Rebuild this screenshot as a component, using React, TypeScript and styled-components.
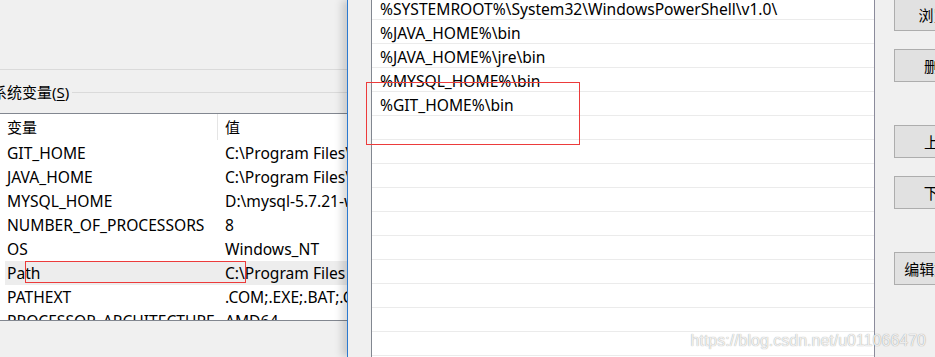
import styled, { createGlobalStyle } from 'styled-components';

const GlobalStyle = createGlobalStyle`
  body {
    margin: 0;
    background: #f0f0f0;
    font-family: 'Noto Sans', 'Noto Sans CJK SC', sans-serif;
    font-size: 15.6px;
    color: #000000;
  }
`;

const variables: [string, string][] = [
  ['GIT_HOME', 'C:\\Program Files\\Git'],
  ['JAVA_HOME', 'C:\\Program Files\\Java\\jdk1.8.0'],
  ['MYSQL_HOME', 'D:\\mysql-5.7.21-winx64'],
  ['NUMBER_OF_PROCESSORS', '8'],
  ['OS', 'Windows_NT'],
  ['Path', 'C:\\Program Files (x86)\\Common Files'],
  ['PATHEXT', '.COM;.EXE;.BAT;.CMD;.VBS'],
  ['PROCESSOR_ARCHITECTURE', 'AMD64'],
];

const paths = [
  '%SYSTEMROOT%\\System32\\WindowsPowerShell\\v1.0\\',
  '%JAVA_HOME%\\bin',
  '%JAVA_HOME%\\jre\\bin',
  '%MYSQL_HOME%\\bin',
  '%GIT_HOME%\\bin',
  '', '', '', '', '', '', '', '', '', '',
];

const buttons = [
  { label: '浏览(B)...', gap: -2 },
  { label: '删除(D)', gap: 18 },
  { label: '上移(U)', gap: 43 },
  { label: '下移(O)', gap: 18 },
  { label: '编辑文本(T)...', gap: 43 },
];

export default function App() {
  return (
    <Screen>
      <GlobalStyle />
      <LeftWindow>
        <Divider />
        <GroupHeader>
          <GroupLabel>
            系统变量(<u>S</u>)
          </GroupLabel>
          <GroupLine />
        </GroupHeader>
        <Table>
          <HeaderRow>
            <HeaderCell $divider>变量</HeaderCell>
            <HeaderCell>值</HeaderCell>
          </HeaderRow>
          {variables.map(([name, value]) => (
            <Row key={name} $selected={name === 'Path'}>
              <Cell>{name}</Cell>
              <Cell>{value}</Cell>
            </Row>
          ))}
        </Table>
      </LeftWindow>

      <Dialog>
        <PathList>
          {paths.map((p, i) => (
            <PathRow key={i}>{p}</PathRow>
          ))}
        </PathList>
        <ButtonColumn>
          {buttons.map((b) => (
            <ActionButton key={b.label} $gap={b.gap}>
              {b.label}
            </ActionButton>
          ))}
        </ButtonColumn>
      </Dialog>

      <Marker style={{ left: 25, top: 261, width: 221, height: 22 }} />
      <Marker style={{ left: 366, top: 82, width: 214, height: 63 }} />
      <Watermark>https://blog.csdn.net/u011066470</Watermark>
    </Screen>
  );
}

const Screen = styled.div`
  width: 935px;
  height: 357px;
  display: flex;
  position: relative;
  overflow: hidden;
  background: #f0f0f0;
`;

const LeftWindow = styled.div`
  width: 347px;
  flex-shrink: 0;
  display: flex;
  flex-direction: column;
  overflow: hidden;
`;

const Divider = styled.div`
  margin-top: 69px;
  border-top: 1px solid #dadada;
`;

const GroupHeader = styled.div`
  margin-top: 11px;
  height: 22px;
  display: flex;
  align-items: center;
`;

const GroupLabel = styled.span`
  margin-left: -8px;
  margin-right: 3px;
  font-size: 15px;
  line-height: 22px;
  white-space: nowrap;

  u {
    text-underline-offset: 2px;
  }
`;

const GroupLine = styled.div`
  flex: 1;
  border-top: 1px solid #dadada;
`;

const Table = styled.div`
  margin-top: 10px;
  width: 600px;
  height: 208px;
  box-sizing: border-box;
  border-top: 1px solid #828790;
  border-bottom: 1px solid #828790;
  background: #ffffff;
  overflow: hidden;
`;

const HeaderRow = styled.div`
  margin-left: 5px;
  height: 27px;
  display: grid;
  grid-template-columns: 213px 1fr;
  align-items: start;
`;

const HeaderCell = styled.div<{ $divider?: boolean }>`
  padding-left: 2px;
  height: 26px;
  font-size: 15px;
  line-height: 26px;
  border-right: ${(p) => (p.$divider ? '1px solid #e5e5e5' : 'none')};
  &:last-child {
    padding-left: 7px;
  }
`;

const Row = styled.div<{ $selected?: boolean }>`
  margin-left: 5px;
  height: 24px;
  display: grid;
  grid-template-columns: 213px 1fr;
  line-height: 24px;
  background: ${(p) => (p.$selected ? '#ededed' : 'transparent')};
`;

const Cell = styled.div`
  padding-left: 2px;
  white-space: nowrap;
  overflow: hidden;
  &:last-child {
    padding-left: 7px;
  }
`;

const Dialog = styled.div`
  flex: 1;
  display: flex;
  padding-left: 23px;
  border-left: 1px solid #2b79d0;
  background: #f0f0f0;
  box-shadow: -5px 0 8px rgba(0, 0, 0, 0.16);
  position: relative;
  z-index: 1;
`;

const PathList = styled.div`
  width: 504px;
  flex-shrink: 0;
  box-sizing: border-box;
  border-left: 1px solid #828790;
  border-right: 1px solid #8b8b9b;
  background: #ffffff;
  display: flex;
  flex-direction: column;
  overflow: hidden;
`;

const PathRow = styled.div`
  height: 24px;
  flex-shrink: 0;
  box-sizing: border-box;
  padding: 3px 0 0 8px;
  line-height: 20px;
  border-bottom: 1px solid #ebebeb;
  white-space: nowrap;

  &:first-child {
    margin-top: -4px;
  }
`;

const ButtonColumn = styled.div`
  padding-left: 19px;
  display: flex;
  flex-direction: column;
`;

const ActionButton = styled.button<{ $gap: number }>`
  margin-top: ${(p) => p.$gap}px;
  width: 110px;
  height: 33px;
  flex-shrink: 0;
  padding: 0;
  border: 1px solid #adadad;
  background: #e1e1e1;
  font-family: inherit;
  font-size: 15px;
  color: #000000;
  white-space: nowrap;
`;

const Marker = styled.div`
  position: absolute;
  box-sizing: border-box;
  border: 1px solid #ec3b3b;
  z-index: 2;
`;

const Watermark = styled.div`
  position: absolute;
  right: 9px;
  top: 332px;
  z-index: 3;
  font-family: 'Liberation Sans', Arial, sans-serif;
  font-size: 16px;
  color: rgba(250, 250, 250, 0.9);
  text-shadow: 0 0 1px rgba(0, 0, 0, 0.45);
  white-space: nowrap;
`;
